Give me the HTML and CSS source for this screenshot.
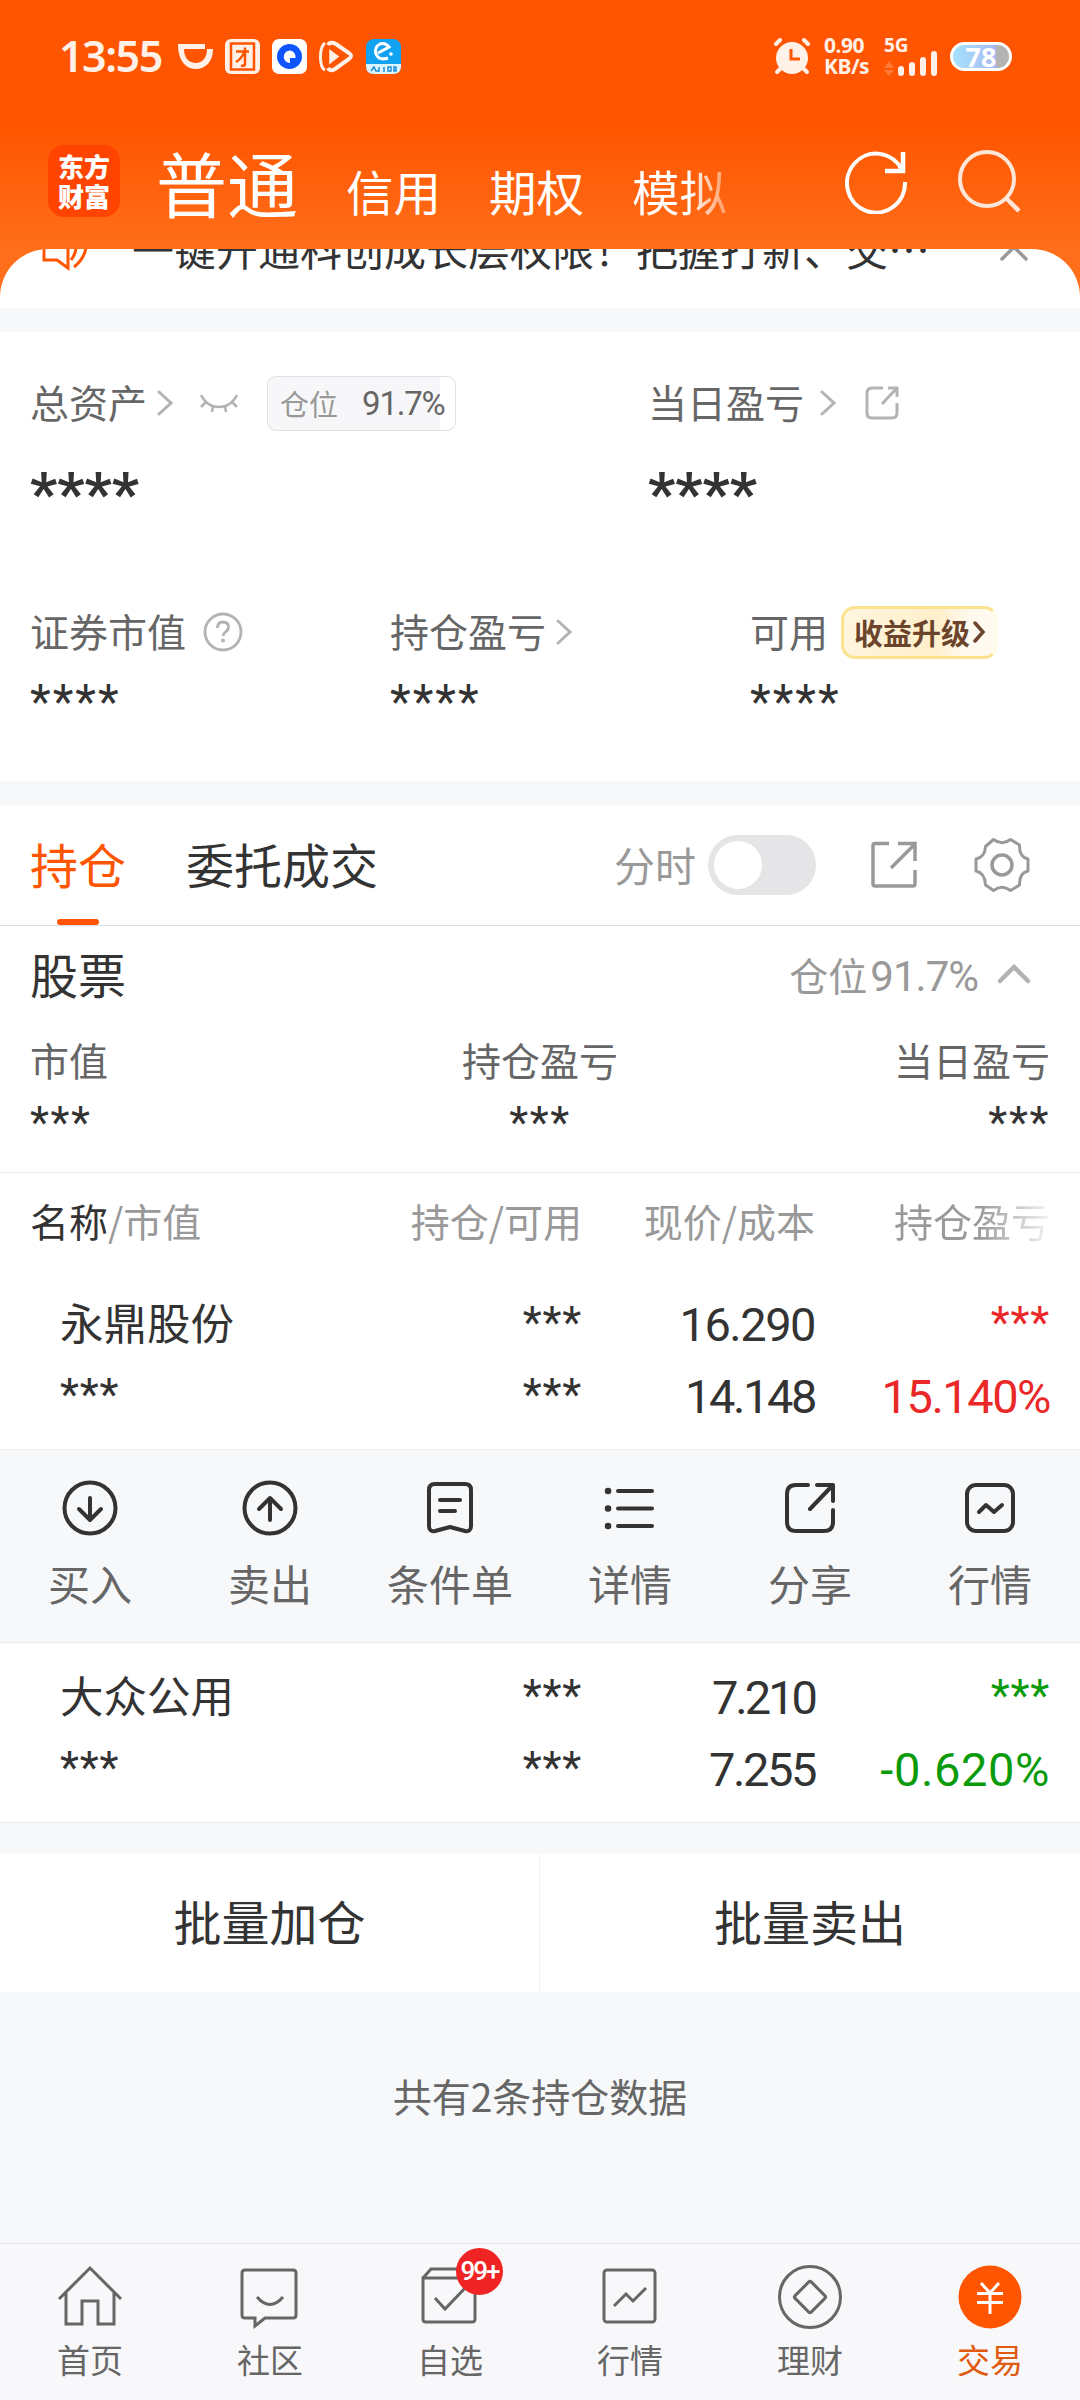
FILE: index.html
```html
<!DOCTYPE html>
<html lang="zh-CN">
<head>
  <meta charset="UTF-8">
  <meta name="viewport" content="width=device-width, initial-scale=1">
  <title>交易</title>
  <link rel="stylesheet" href="styles.css">
</head>
<body>
  <header class="top">
    <div class="status">
      <span class="time">13:55</span>
      <div class="status-apps">
        <svg width="35" height="35" viewBox="0 0 35 35"><path d="M0 5h27v5H6c0 9 5 14 12 14 6 0 11-5 11-14h6c0 12-7 20-17 20S0 22 0 5z" fill="#fff0e8"/></svg>
        <svg width="35" height="35" viewBox="0 0 35 35"><rect width="35" height="35" rx="6" fill="#fff0e8"/><rect x="6" y="4.500" width="23" height="26" fill="none" stroke="#f50" stroke-width="2.500"/><path d="M11 12.500h13M20 8.500v17q0 2-4 1M19 14q-3 6-8 9" fill="none" stroke="#f50" stroke-width="2.500"/></svg>
        <svg width="35" height="35" viewBox="0 0 35 35"><rect width="35" height="35" rx="7" fill="#fff"/><circle cx="17.500" cy="17.500" r="12.500" fill="#0f55ff"/><path d="M18 11.500a6 6 0 1 0 0 12.500v-5h5.500a6.500 6.500 0 0 0-5.500-7.500z" fill="#fff"/></svg>
        <svg width="35" height="35" viewBox="0 0 35 35"><path d="M6 4Q1.500 7 1.500 18T6 31" fill="none" stroke="#fff0e8" stroke-width="3"/><path d="M9 6Q11 2 17 5l13 9q4 3 0 6L16 30q-5 3-7-1" fill="none" stroke="#fff0e8" stroke-width="4"/><path d="M11 11.500l8 6-8 6.500z" fill="#fff0e8" stroke="#fff0e8" stroke-width="1.500"/></svg>
        <svg width="35" height="35" viewBox="0 0 35 35"><rect width="35" height="35" rx="8" fill="#11a3f2"/><path d="M0 25h35v2q0 8-8 8H8q-8 0-8-8z" fill="#def4ff"/><path d="M12 14l11-6q-4-5-9-3-6 3-4 10 3 7 12 4" fill="none" stroke="#fff" stroke-width="3"/><circle cx="25" cy="15" r="1.800" fill="#fff"/><path d="M5 32l3-4 2 4h3v-4M18 28v5M22 28h3v4h-3zM28 28h2v4h-2z" fill="none" stroke="#1b8fd6" stroke-width="1.500"/></svg>
      </div>
      <div class="status-right">
        <svg class="alarm" width="38" height="38" viewBox="0 0 38 38"><circle cx="19" cy="21" r="16" fill="#fff0e8"/><path d="M3 7l4-4M35 7l-4-4M7 32l-3 3M31 32l3 3" stroke="#fff0e8" stroke-width="4" stroke-linecap="round"/><path d="M18 12v10h9" fill="none" stroke="#f50" stroke-width="3"/></svg>
        <div class="speed"><span>0.90</span><span>KB/s</span></div>
        <div class="signal">
          <span>5G</span>
          <svg width="54" height="26" viewBox="0 0 54 26"><path d="M0 18l5-7 5 7zM0 20h10l-5 6z" fill="#ff7a38"/><path d="M17 19v4M28 15v8M39 10v13M50 4v19" stroke="#fff0e8" stroke-width="6" stroke-linecap="round"/></svg>
        </div>
        <div class="battery">78</div>
      </div>
    </div>
    <div class="nav-top">
      <div class="logo"><span>东方</span><span>财富</span></div>
      <div class="modes">
        <span class="mode active">普通</span>
        <span class="mode">信用</span>
        <span class="mode">期权</span>
        <span class="mode fade">模拟</span>
      </div>
      <svg class="refresh" width="64" height="66" viewBox="0 0 64 66"><path d="M60 34A29 29.500 0 1 1 57 22" fill="none" stroke="#fff" stroke-width="4"/><path d="M58 4v19H40" fill="none" stroke="#fff" stroke-width="4.500"/></svg>
      <svg class="search" width="64" height="66" viewBox="0 0 64 66"><circle cx="29" cy="31" r="27" fill="none" stroke="#ffe6d8" stroke-width="4"/><path d="M48 50l13 13" stroke="#ffe6d8" stroke-width="4.500"/></svg>
    </div>
  </header>

  <section class="notice">
    <svg class="horn" width="50" height="40" viewBox="0 0 50 40"><path d="M2 9h11L26 2v35L15 29H2z" fill="none" stroke="#f50" stroke-width="3"/><path d="M33 12q3 8-4 17M44 5Q47 24 32 36" fill="none" stroke="#f50" stroke-width="3"/></svg>
    <span class="notice-text">一键开通科创成长层权限！把握打新、交…</span>
    <svg width="30" height="18" viewBox="0 0 30 18"><path d="M3 15L15 3l12 12" fill="none" stroke="#999" stroke-width="3.500" stroke-linecap="round"/></svg>
  </section>

  <section class="assets">
    <div class="assets-main">
      <div>
        <div class="asset-label">总资产
          <svg class="arrow" width="16" height="26" viewBox="0 0 16 26"><path d="M2 2l12 11L2 24" fill="none" stroke="#b3b3b3" stroke-width="3" stroke-linecap="round"/></svg>
          <svg class="eye" width="40" height="20" viewBox="0 0 40 20"><path d="M2 2q6 12 18 12T38 2M7 9l-5 5M14 13l-1 6M26 13l1 6M33 9l5 5" fill="none" stroke="#b3b3b3" stroke-width="2.500"/></svg>
          <span class="chip">仓位<b>91.7%</b></span>
        </div>
        <div class="stars stars-lg">****</div>
      </div>
      <div>
        <div class="asset-label">当日盈亏
          <svg class="arrow wide" width="16" height="26" viewBox="0 0 16 26"><path d="M2 2l12 11L2 24" fill="none" stroke="#b3b3b3" stroke-width="3" stroke-linecap="round"/></svg>
          <svg class="share" width="34" height="34" viewBox="0 0 34 34"><path d="M18 2H7Q2 2 2 7v20q0 5 5 5h20q5 0 5-5V17M23 2h9v9M31 3L17 18" fill="none" stroke="#b3b3b3" stroke-width="3"/></svg>
        </div>
        <div class="stars stars-lg">****</div>
      </div>
    </div>
    <div class="assets-sub">
      <div>
        <div class="asset-label">证券市值
          <svg class="help" width="40" height="40" viewBox="0 0 40 40"><circle cx="20" cy="20" r="18" fill="none" stroke="#b3b3b3" stroke-width="2.800"/><path d="M14.500 16q0-6 5.500-6t5.500 5q0 3-3 5-2.500 2-2.500 4" fill="none" stroke="#b3b3b3" stroke-width="2.800"/><circle cx="20" cy="28.500" r="1.900" fill="#b3b3b3"/></svg>
        </div>
        <div class="stars stars-md">****</div>
      </div>
      <div>
        <div class="asset-label">持仓盈亏
          <svg class="arrow" width="16" height="26" viewBox="0 0 16 26"><path d="M2 2l12 11L2 24" fill="none" stroke="#b3b3b3" stroke-width="3" stroke-linecap="round"/></svg>
        </div>
        <div class="stars stars-md">****</div>
      </div>
      <div>
        <div class="asset-label">可用
          <span class="upgrade">收益升级<svg width="13" height="22" viewBox="0 0 13 22"><path d="M2 2l8 9-8 9" fill="none" stroke="#6b442b" stroke-width="3.500" stroke-linecap="round"/></svg></span>
        </div>
        <div class="stars stars-md">****</div>
      </div>
    </div>
  </section>

  <section class="holdings">
    <div class="tabs">
      <span class="tab active">持仓</span>
      <span class="tab">委托成交</span>
      <div class="tools">
        <span>分时</span>
        <i class="toggle"></i>
        <svg class="export" width="46" height="48" viewBox="0 0 46 48"><path d="M18 2.500H4q-2 0-2 2V43q0 2 2 2h38q2 0 2-2V29M27 2.500h17V20M43 4L20 27" fill="none" stroke="#999" stroke-width="3.500"/></svg>
        <svg class="gear" width="56" height="56" viewBox="0 0 56 56"><path d="M11.500 9.500L19.500 2.500Q28 9 36.500 2.500L45.500 8Q45 20 54 22V34Q45 36 45.500 48L36.500 53.500Q28 47 19.500 53.500L11.500 48Q11 36 2 34V22Q11 20 11.500 9.500z" fill="none" stroke="#999" stroke-width="3" stroke-linejoin="round"/><circle cx="28" cy="28" r="10" fill="none" stroke="#999" stroke-width="3.500"/></svg>
      </div>
    </div>

    <div class="group">
      <h2>股票</h2>
      <div class="group-ratio"><span>仓位</span><b>91.7%</b>
        <svg width="34" height="20" viewBox="0 0 34 20"><path d="M3 17L17 3l14 14" fill="none" stroke="#b3b3b3" stroke-width="4.500" stroke-linecap="round"/></svg>
      </div>
    </div>
    <div class="summary">
      <div><span>市值</span><div class="stars stars-sm">***</div></div>
      <div><span>持仓盈亏</span><div class="stars stars-sm">***</div></div>
      <div><span>当日盈亏</span><div class="stars stars-sm">***</div></div>
    </div>

    <div class="row table-head">
      <span><em>名称</em>/市值</span>
      <span>持仓/可用</span>
      <span>现价/成本</span>
      <span class="fade">持仓盈亏</span>
    </div>

    <div class="row stock">
      <span class="name">永鼎股份</span>
      <span class="stars">***</span>
      <span class="num">16.290</span>
      <span class="stars up">***</span>
      <span class="stars indent">***</span>
      <span class="stars">***</span>
      <span class="num tight">14.148</span>
      <span class="num up">15.140%</span>
    </div>

    <div class="actions">
      <div class="action">
        <svg width="56" height="56" viewBox="0 0 56 56"><circle cx="28" cy="28" r="25.500"/><path d="M28 18v22M17 29l11 11 11-11"/></svg>
        <span>买入</span>
      </div>
      <div class="action">
        <svg width="56" height="56" viewBox="0 0 56 56"><circle cx="28" cy="28" r="25.500"/><path d="M28 40V18M17 29l11-11 11 11"/></svg>
        <span>卖出</span>
      </div>
      <div class="action">
        <svg width="56" height="56" viewBox="0 0 56 56"><path d="M13 4h30q6 0 6 6v36q0 6-6 5l-15-4-15 4q-6 1-6-5V10q0-6 6-6zM18 20h20M18 31h15"/></svg>
        <span>条件单</span>
      </div>
      <div class="action">
        <svg width="56" height="56" viewBox="0 0 56 56"><path d="M16 11h34M16 28.500h34M16 46h34"/><path class="dots" d="M6 11h.1M6 28.500h.1M6 46h.1"/></svg>
        <span>详情</span>
      </div>
      <div class="action">
        <svg width="56" height="56" viewBox="0 0 56 56"><path d="M26 5H14Q5 5 5 14v28q0 9 9 9h28q9 0 9-9V30M35 5h16v16M50 6L28 29"/></svg>
        <span>分享</span>
      </div>
      <div class="action">
        <svg width="56" height="56" viewBox="0 0 56 56"><rect x="5" y="5" width="46" height="46" rx="9"/><path d="M17 32l7-7 8 7 8-7"/></svg>
        <span>行情</span>
      </div>
    </div>

    <div class="row stock">
      <span class="name">大众公用</span>
      <span class="stars">***</span>
      <span class="num tighter">7.210</span>
      <span class="stars down">***</span>
      <span class="stars indent">***</span>
      <span class="stars">***</span>
      <span class="num tight">7.255</span>
      <span class="num wide down">-0.620%</span>
    </div>
  </section>

  <div class="batch">
    <span>批量加仓</span>
    <span>批量卖出</span>
  </div>
  <p class="count">共有2条持仓数据</p>

  <nav class="bottom">
    <div class="item">
      <svg width="66" height="66" viewBox="0 0 66 66"><path d="M2 35L33 4l31 31M9 29v31h16V37h16v23h16V29"/></svg>
      <span>首页</span>
    </div>
    <div class="item">
      <svg width="66" height="66" viewBox="0 0 66 66"><path d="M8 6h48q3 0 3 3v42q0 3-3 3H28l-10 8v-8H8q-3 0-3-3V9q0-3 3-3zM20 33q13 15 26 0"/></svg>
      <span>社区</span>
    </div>
    <div class="item">
      <svg width="66" height="66" viewBox="0 0 66 66"><path d="M6 14h52v41q0 3-3 3H9q-3 0-3-3zM6 14l8-9h36l8 9M18 34l10 11 23-24"/></svg>
      <i class="badge">99+</i>
      <span>自选</span>
    </div>
    <div class="item">
      <svg width="66" height="66" viewBox="0 0 66 66"><rect x="7" y="6" width="51" height="52" rx="3"/><path d="M17 42l12-12 7 7 13-13"/></svg>
      <span>行情</span>
    </div>
    <div class="item">
      <svg width="66" height="66" viewBox="0 0 66 66"><circle cx="33" cy="33" r="30.500"/><rect x="21.500" y="21.500" width="23" height="23" rx="2" transform="rotate(45 33 33)"/></svg>
      <span>理财</span>
    </div>
    <div class="item active">
      <svg width="66" height="66" viewBox="0 0 66 66"><circle cx="33" cy="33" r="31.500" fill="#f50" stroke="none"/><path d="M24 19l9 10 9-10M20 29.500h26M20 38.500h26M33 29v21" stroke="#fff"/></svg>
      <span>交易</span>
    </div>
  </nav>
</body>
</html>
```
FILE: styles.css
```css
:root {
  --orange: #ff5500;
  --text: #333333;
  --sub: #666666;
  --light: #999999;
  --band: #f7f7fa;
  --up: #eb2828;
  --down: #0a9b0a;
}
* {
  box-sizing: border-box;
  margin: 0;
  padding: 0;
}
body {
  width: 1080px;
  height: 2400px;
  overflow: hidden;
  display: flex;
  flex-direction: column;
  font-family: "Noto Sans CJK SC", sans-serif;
  font-size: 39px;
  color: var(--text);
  background: #f7f8fa;
}
svg {
  display: block;
  flex: none;
}
b, em, i {
  font-weight: 400;
  font-style: normal;
}

/* header */
.top {
  height: 308px;
  flex: none;
  background: linear-gradient(#ff5500 125px, #ff6e1a 249px);
}
.status {
  height: 112px;
  padding: 0 68px 0 59px;
  display: flex;
  align-items: center;
  color: #fff0e8;
}
.time {
  width: 119px;
  font: 600 43px/60px "Noto Sans", sans-serif;
  letter-spacing: -1.5px;
}
.status-apps {
  display: flex;
  gap: 12px;
}
.status-right {
  margin-left: auto;
  display: flex;
  align-items: center;
}
.speed {
  width: 48px;
  margin-left: 13px;
  display: flex;
  flex-direction: column;
  font: 700 21px/21px "Noto Sans", sans-serif;
  letter-spacing: -0.5px;
}
.signal {
  margin-left: 12px;
  font: 700 19px/14px "Noto Sans", sans-serif;
}
.signal span {
  display: block;
  padding-top: 2px;
}
.signal svg {
  margin-top: -2px;
}
.battery {
  width: 62px;
  height: 29px;
  margin-left: 12px;
  border: 3px solid #fff;
  border-radius: 15px;
  background: linear-gradient(90deg, #a5e2ff, #a9b9f0 76%, #b3b3b3 76%);
  color: #fff;
  font: 700 27px/23px "Noto Sans", sans-serif;
  text-align: center;
}
.nav-top {
  height: 137px;
  padding-left: 48px;
  display: flex;
  align-items: center;
}
.logo {
  width: 72px;
  height: 72px;
  border-radius: 16px;
  background: #ff4400;
  color: #fff;
  display: flex;
  flex-direction: column;
  align-items: center;
  justify-content: center;
  font-size: 26px;
  font-weight: 900;
  line-height: 30px;
}
.modes {
  width: 689px;
  margin-left: 36px;
  display: flex;
  align-items: center;
  gap: 48px;
  color: #fff;
  font-size: 47.5px;
  line-height: 100px;
}
.mode {
  padding-top: 20px;
}
.mode.active {
  padding: 0;
  font-size: 71px;
}
.mode.fade {
  background: linear-gradient(90deg, #fff 60%, #ff9a60);
  background-clip: text;
  color: transparent;
}
.search {
  margin-left: 49px;
}

.notice {
  height: 59px;
  margin-top: -59px;
  flex: none;
  overflow: hidden;
  display: flex;
  padding: 0 51px 0 42px;
  border-radius: 48px 48px 0 0;
  background: #fff;
}
.notice > * {
  margin-top: -5px;
}
.notice .horn {
  margin-top: -18px;
}
.notice .notice-text {
  margin: -31px auto 0 40px;
  font-size: 42px;
  line-height: 60px;
  white-space: nowrap;
}

/* assets */
.assets {
  height: 449px;
  margin-top: 24px;
  padding: 39px 30px 0;
  flex: none;
  background: #fff;
}
.assets-main {
  height: 229px;
  display: grid;
  grid-template-columns: 618px 1fr;
}
.assets-sub {
  display: grid;
  grid-template-columns: repeat(3, 360px);
}
.asset-label {
  height: 60px;
  display: flex;
  align-items: center;
  line-height: 60px;
  color: var(--sub);
}
.asset-label > * {
  margin-top: 4px;
}
.arrow {
  margin-left: 10px;
}
.arrow.wide {
  margin-left: 16px;
}
.eye {
  margin-left: 26px;
}
.share {
  margin-left: 29px;
}
.help {
  margin-left: 17px;
}
.chip {
  width: 189px;
  height: 55px;
  margin-left: 28px;
  padding-left: 12px;
  display: flex;
  align-items: center;
  border: 1px solid #e0e0e2;
  border-radius: 9px;
  background: linear-gradient(90deg, var(--band) 92%, #fff 92%);
  font-size: 29px;
  color: var(--light);
}
.chip b {
  margin-left: 24px;
  font: 33px Roboto, sans-serif;
  letter-spacing: -1.2px;
  color: var(--sub);
}
.upgrade {
  width: 157px;
  height: 53px;
  margin-left: 13px;
  padding-left: 10px;
  display: flex;
  align-items: center;
  gap: 3px;
  border: 3px solid #fbe28f;
  border-right-color: #fffbe6;
  border-radius: 14px;
  background: linear-gradient(100deg, #fff6df, #ffefcb 60%, #fffaf0 80%);
  color: #6b442b;
  font-size: 29px;
  font-weight: 700;
  line-height: 44px;
}
.stars {
  font-family: Roboto, sans-serif;
}
.stars-lg {
  font-size: 60px;
  font-weight: 700;
  line-height: 60px;
  margin-top: 33px;
}
.stars-md {
  font-size: 48px;
  line-height: 48px;
  margin-top: 18px;
  letter-spacing: 2px;
}
.stars-sm {
  font-size: 44px;
  line-height: 44px;
  letter-spacing: 1.6px;
}

/* holdings */
.holdings {
  margin-top: 24px;
  flex: none;
  background: #fff;
}
.tabs {
  height: 121px;
  padding: 0 50px 0 30px;
  display: flex;
  align-items: center;
  border-bottom: 1px solid #dcdcde;
}
.tab {
  height: 120px;
  margin-right: 60px;
  font-size: 48px;
  line-height: 116px;
}
.tab.active {
  color: var(--orange);
  display: flex;
  flex-direction: column;
  align-items: center;
}
.tab.active::after {
  content: "";
  width: 42px;
  height: 6px;
  margin-top: -2px;
  border-radius: 3px;
  background: var(--orange);
}
.tools {
  margin-left: auto;
  display: flex;
  align-items: center;
  color: var(--light);
  font-size: 41px;
}
.tools span {
  padding-bottom: 3px;
}
.toggle {
  width: 108px;
  height: 60px;
  margin-left: 12px;
  padding: 6px;
  border-radius: 30px;
  background: #e5e5e7;
}
.toggle::before {
  content: "";
  display: block;
  width: 48px;
  height: 48px;
  border-radius: 50%;
  background: #fff;
}
.export {
  margin-left: 55px;
}
.gear {
  margin-left: 57px;
}
.group {
  height: 100px;
  padding: 0 49px 0 30px;
  display: flex;
  align-items: center;
  justify-content: space-between;
}
h2 {
  padding-bottom: 6px;
  font-size: 48px;
  font-weight: 400;
}
.group-ratio {
  display: flex;
  align-items: center;
  color: var(--light);
}
.group-ratio span {
  padding-bottom: 5px;
}
.group-ratio b {
  margin: 0 19px 0 3px;
  font: 42px Roboto, sans-serif;
  letter-spacing: -1px;
}
.group-ratio svg {
  margin-top: -4px;
}
.summary {
  height: 147px;
  padding: 3px 30px 0;
  display: grid;
  grid-template-columns: repeat(3, 1fr);
  line-height: 60px;
  color: var(--sub);
  border-bottom: 1px solid #ebebed;
}
.summary > :nth-child(2) {
  text-align: center;
}
.summary > :nth-child(3) {
  text-align: right;
}
.summary .stars {
  margin-top: 12px;
  color: var(--text);
}
.row {
  padding: 0 30px;
  display: grid;
  grid-template-columns: 302px 250px 233px 235px;
  text-align: right;
}
.row > :nth-child(4n + 1) {
  text-align: left;
}
.table-head {
  height: 104px;
  line-height: 94px;
  color: var(--light);
}
.table-head em {
  color: var(--text);
}
.table-head .fade {
  background: linear-gradient(90deg, #999 70%, #f4f4f4);
  background-clip: text;
  color: transparent;
}
.stock {
  height: 172px;
  padding-top: 12px;
  grid-auto-rows: 72px;
  line-height: 72px;
}
.actions + .stock {
  height: 180px;
  padding-top: 19px;
  border-bottom: 1px solid #ebebed;
}
.row .name {
  padding-left: 30px;
  font-size: 43.5px;
  line-height: 66px;
}
.indent {
  padding-left: 30px;
}
.stock .stars {
  font-size: 44px;
  line-height: 68px;
  letter-spacing: 0.8px;
}
.num {
  font: 47px/72px Roboto, sans-serif;
  letter-spacing: -1.5px;
}
.num.tight {
  letter-spacing: -2.4px;
}
.num.tighter {
  letter-spacing: -3px;
}
.num.wide {
  letter-spacing: 0.6px;
}
.up {
  color: var(--up);
}
.down {
  color: var(--down);
}
.actions {
  height: 194px;
  padding-top: 30px;
  display: grid;
  grid-template-columns: repeat(6, 1fr);
  background: #f7f8fa;
  border-top: 1px solid #ebebed;
  border-bottom: 1px solid #ebebed;
}
.action {
  display: flex;
  flex-direction: column;
  align-items: center;
  font-size: 42px;
  line-height: 60px;
  color: var(--sub);
}
.action svg {
  margin-bottom: 17px;
  fill: none;
  stroke: #333;
  stroke-width: 4;
  stroke-linecap: round;
  stroke-linejoin: round;
}
.action .dots {
  stroke-width: 6.5;
}

.batch {
  height: 138px;
  margin-top: 31px;
  flex: none;
  display: grid;
  grid-template-columns: 539px 1fr;
  background: #fff;
  font-size: 48px;
  line-height: 132px;
  text-align: center;
}
.batch span + span {
  border-left: 1px solid #f0f0f2;
}
.count {
  margin-top: 73px;
  text-align: center;
  font-size: 39px;
  line-height: 60px;
  color: var(--sub);
}

/* bottom navigation */
.bottom {
  height: 157px;
  margin-top: auto;
  padding-top: 20px;
  flex: none;
  display: grid;
  grid-template-columns: repeat(6, 1fr);
  border-top: 1px solid #e2e2e4;
  background: #f8f8fa;
}
.item {
  position: relative;
  display: flex;
  flex-direction: column;
  align-items: center;
  font-size: 33px;
  line-height: 44px;
  color: var(--sub);
}
.item svg {
  margin-bottom: 7px;
  fill: none;
  stroke: #666;
  stroke-width: 3;
}
.item.active {
  color: #e05a10;
}
.badge {
  position: absolute;
  top: -16px;
  left: 96px;
  width: 47px;
  height: 47px;
  border-radius: 50%;
  background: #f02424;
  color: #fff;
  font: 500 26px/47px Roboto, sans-serif;
  letter-spacing: -2px;
  text-align: center;
}
```
